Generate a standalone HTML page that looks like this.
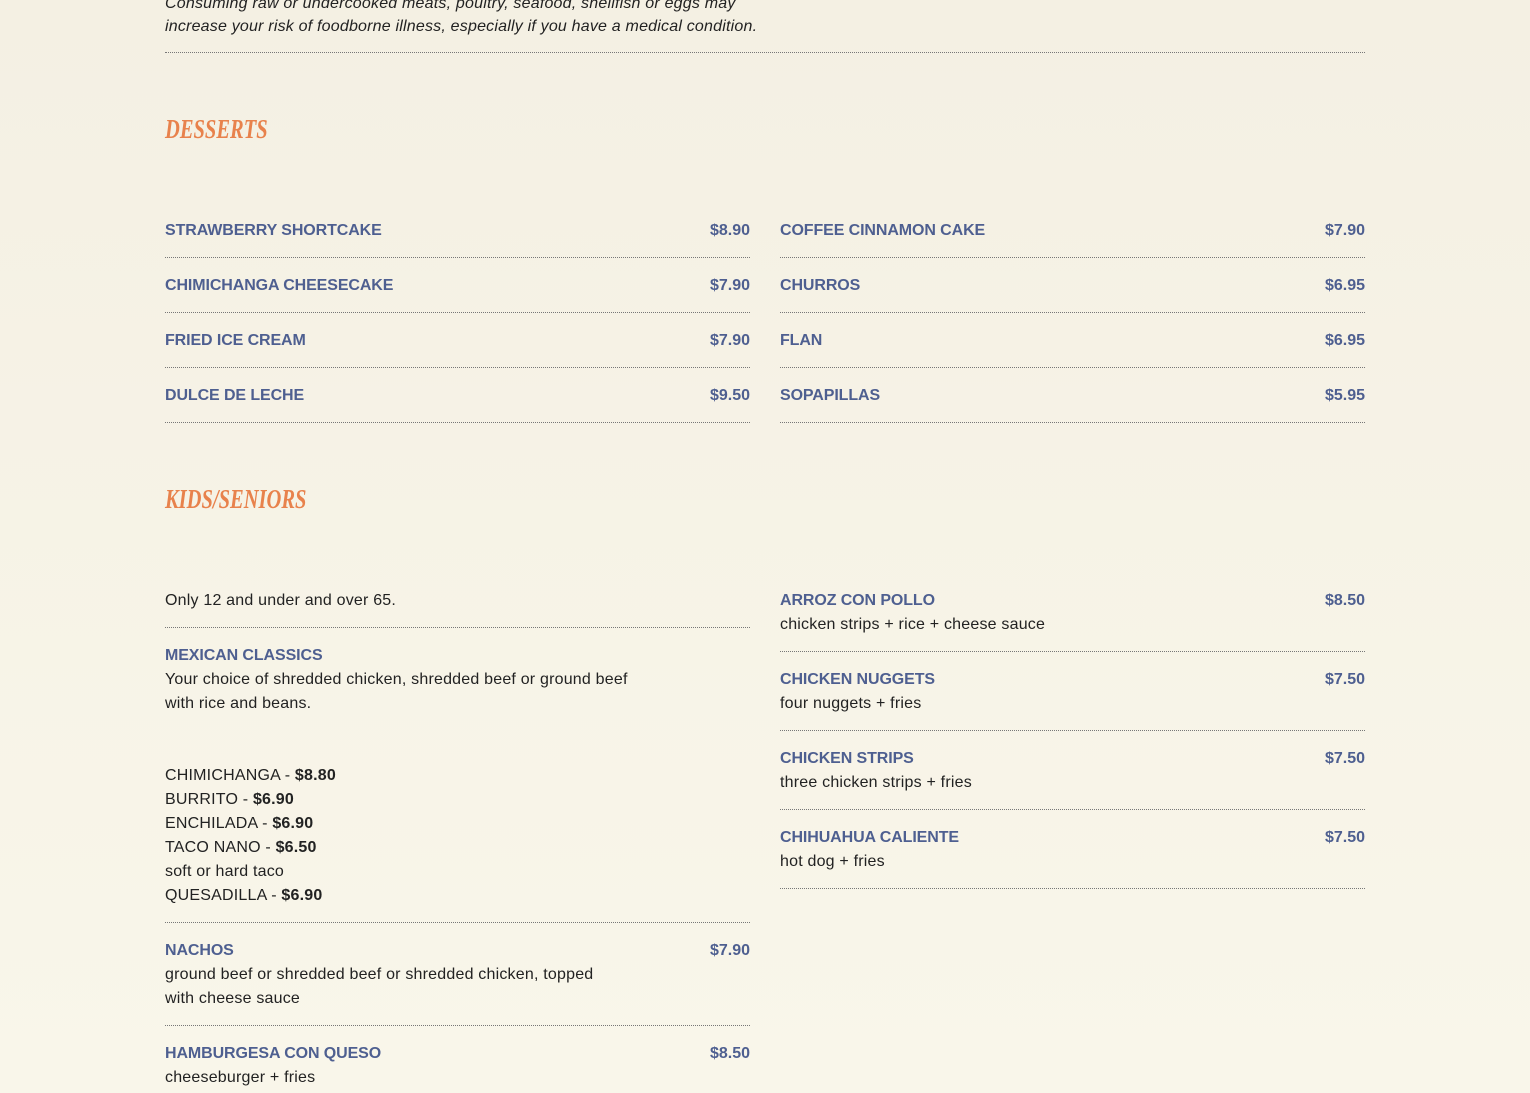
<!DOCTYPE html>
<html><head><meta charset="utf-8"><style>
body{margin:0;width:1530px;height:1093px;overflow:hidden;position:relative;background:linear-gradient(#f4f0e3,#f9f6ea);font-family:"Liberation Sans",sans-serif;font-size:16px;color:#222;}
div{position:absolute;line-height:20px;white-space:nowrap}
.n{color:#4e5f90;font-weight:bold;font-size:16px;letter-spacing:-0.1px}
.p{color:#4e5f90;font-weight:bold;text-align:right;width:100px}
.l{height:0;border-top:1px dotted #777;}
.h{font-family:"Liberation Serif",serif;font-style:italic;font-weight:bold;color:#e8824c;font-size:27px;line-height:30px;transform:scaleX(0.76);transform-origin:0 0}
.d{color:#222;letter-spacing:0.2px}
b{font-weight:bold}
</style></head><body>
<div style="left:165px;top:-6px;font-style:italic;color:#222;letter-spacing:0.2px">Consuming raw or undercooked meats, poultry, seafood, shellfish or eggs may</div>
<div style="left:165px;top:17px;font-style:italic;color:#222;letter-spacing:0.2px">increase your risk of foodborne illness, especially if you have a medical condition.</div>
<div class="l" style="left:165px;width:1200px;top:52px"></div>

<div class="h" style="left:165px;top:114px">DESSERTS</div>

<div class="n" style="left:165px;top:221px">STRAWBERRY SHORTCAKE</div><div class="p" style="left:650px;top:221px">$8.90</div>
<div class="l" style="left:165px;width:585px;top:257px"></div>
<div class="n" style="left:165px;top:276px">CHIMICHANGA CHEESECAKE</div><div class="p" style="left:650px;top:276px">$7.90</div>
<div class="l" style="left:165px;width:585px;top:312px"></div>
<div class="n" style="left:165px;top:331px">FRIED ICE CREAM</div><div class="p" style="left:650px;top:331px">$7.90</div>
<div class="l" style="left:165px;width:585px;top:367px"></div>
<div class="n" style="left:165px;top:386px">DULCE DE LECHE</div><div class="p" style="left:650px;top:386px">$9.50</div>
<div class="l" style="left:165px;width:585px;top:422px"></div>

<div class="n" style="left:780px;top:221px">COFFEE CINNAMON CAKE</div><div class="p" style="left:1265px;top:221px">$7.90</div>
<div class="l" style="left:780px;width:585px;top:257px"></div>
<div class="n" style="left:780px;top:276px">CHURROS</div><div class="p" style="left:1265px;top:276px">$6.95</div>
<div class="l" style="left:780px;width:585px;top:312px"></div>
<div class="n" style="left:780px;top:331px">FLAN</div><div class="p" style="left:1265px;top:331px">$6.95</div>
<div class="l" style="left:780px;width:585px;top:367px"></div>
<div class="n" style="left:780px;top:386px">SOPAPILLAS</div><div class="p" style="left:1265px;top:386px">$5.95</div>
<div class="l" style="left:780px;width:585px;top:422px"></div>

<div class="h" style="left:165px;top:484px">KIDS/SENIORS</div>

<div class="d" style="left:165px;top:591px">Only 12 and under and over 65.</div>
<div class="l" style="left:165px;width:585px;top:627px"></div>
<div class="n" style="left:165px;top:646px">MEXICAN CLASSICS</div>
<div class="d" style="left:165px;top:670px">Your choice of shredded chicken, shredded beef or ground beef</div>
<div class="d" style="left:165px;top:694px">with rice and beans.</div>
<div class="d" style="left:165px;top:766px">CHIMICHANGA - <b>$8.80</b></div>
<div class="d" style="left:165px;top:790px">BURRITO - <b>$6.90</b></div>
<div class="d" style="left:165px;top:814px">ENCHILADA - <b>$6.90</b></div>
<div class="d" style="left:165px;top:838px">TACO NANO - <b>$6.50</b></div>
<div class="d" style="left:165px;top:862px">soft or hard taco</div>
<div class="d" style="left:165px;top:886px">QUESADILLA - <b>$6.90</b></div>
<div class="l" style="left:165px;width:585px;top:922px"></div>
<div class="n" style="left:165px;top:941px">NACHOS</div><div class="p" style="left:650px;top:941px">$7.90</div>
<div class="d" style="left:165px;top:965px">ground beef or shredded beef or shredded chicken, topped</div>
<div class="d" style="left:165px;top:989px">with cheese sauce</div>
<div class="l" style="left:165px;width:585px;top:1025px"></div>
<div class="n" style="left:165px;top:1044px">HAMBURGESA CON QUESO</div><div class="p" style="left:650px;top:1044px">$8.50</div>
<div class="d" style="left:165px;top:1068px">cheeseburger + fries</div>

<div class="n" style="left:780px;top:591px">ARROZ CON POLLO</div><div class="p" style="left:1265px;top:591px">$8.50</div>
<div class="d" style="left:780px;top:615px">chicken strips + rice + cheese sauce</div>
<div class="l" style="left:780px;width:585px;top:651px"></div>
<div class="n" style="left:780px;top:670px">CHICKEN NUGGETS</div><div class="p" style="left:1265px;top:670px">$7.50</div>
<div class="d" style="left:780px;top:694px">four nuggets + fries</div>
<div class="l" style="left:780px;width:585px;top:730px"></div>
<div class="n" style="left:780px;top:749px">CHICKEN STRIPS</div><div class="p" style="left:1265px;top:749px">$7.50</div>
<div class="d" style="left:780px;top:773px">three chicken strips + fries</div>
<div class="l" style="left:780px;width:585px;top:809px"></div>
<div class="n" style="left:780px;top:828px">CHIHUAHUA CALIENTE</div><div class="p" style="left:1265px;top:828px">$7.50</div>
<div class="d" style="left:780px;top:852px">hot dog + fries</div>
<div class="l" style="left:780px;width:585px;top:888px"></div>
</body></html>
